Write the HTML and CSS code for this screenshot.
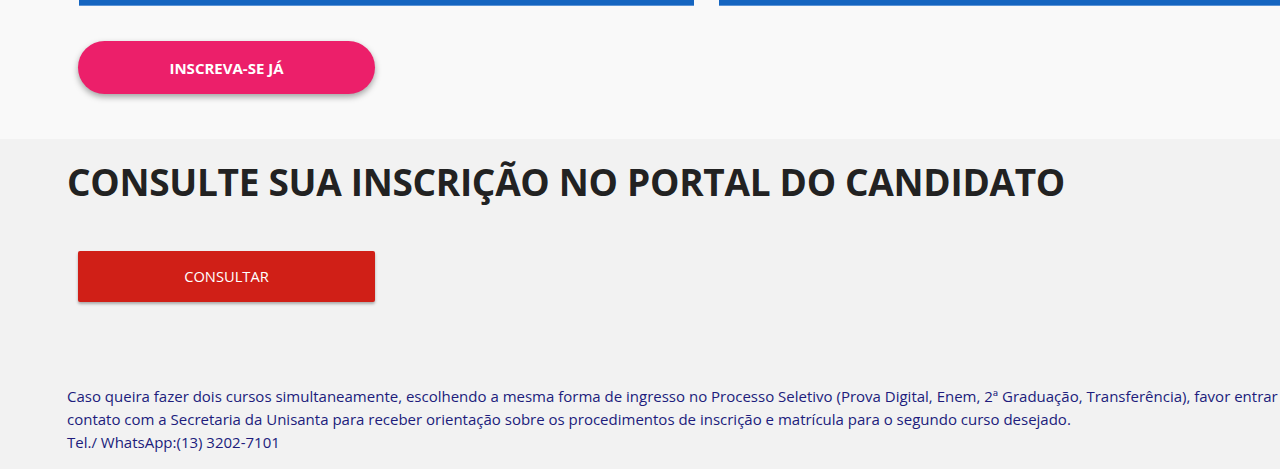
FILE: index.html
```html
<!DOCTYPE html>
<html lang="pt-BR">
<head>
<meta charset="utf-8">
<link rel="stylesheet" href="styles.css">
</head>
<body>
<section class="top">
  <div class="cards">
    <div class="card"></div>
    <div class="card card-wide"></div>
  </div>
  <a class="btn-pink" href="#">INSCREVA-SE JÁ</a>
</section>
<section class="consult">
  <h2 class="title">CONSULTE SUA INSCRIÇÃO NO PORTAL DO CANDIDATO</h2>
  <a class="btn-red" href="#">CONSULTAR</a>
  <p class="note">Caso queira fazer dois cursos simultaneamente, escolhendo a mesma forma de ingresso no Processo Seletivo (Prova Digital, Enem, 2ª Graduação, Transferência), favor entrar em contato com a Secretaria da Unisanta para receber orientação sobre os procedimentos de inscrição e matrícula para o segundo curso desejado.<br>Tel./ WhatsApp:(13) 3202-7101</p>
</section>
</body>
</html>
```
FILE: styles.css
```css
* { box-sizing: border-box; }
html, body { margin: 0; padding: 0; overflow: hidden; }
body {
  font-family: "Open Sans", "DejaVu Sans", sans-serif;
  background: #f2f2f2;
  width: 1280px;
  height: 469px;
}
.top {
  background: #f9f9f9;
  height: 139px;
  padding-left: 78px;
}
.cards {
  display: flex;
  gap: 25px;
  height: 6px;
  margin-left: 1px;
}
.card {
  flex: 0 0 615px;
  height: 6px;
  background: #1565c0;
  border-bottom: 1px solid #5b94d6;
}
.card-wide { flex-basis: 600px; }
.btn-pink {
  display: flex;
  align-items: center;
  justify-content: center;
  margin-top: 35px;
  width: 297px;
  height: 53px;
  border-radius: 27px;
  background: #ec1f6a;
  color: #fff;
  font-weight: 700;
  font-size: 15px;
  text-decoration: none;
  box-shadow: 0 3px 6px rgba(0,0,0,0.35);
}
.consult {
  padding-left: 67px;
}
.title {
  margin: 0;
  padding-top: 17px;
  font-size: 37px;
  line-height: 52px;
  font-weight: 700;
  color: #222;
  letter-spacing: -0.3px;
}
.btn-red {
  display: flex;
  align-items: center;
  justify-content: center;
  margin-top: 43px;
  margin-left: 11px;
  width: 297px;
  height: 51px;
  border-radius: 2px;
  background: #d01f17;
  color: #fff;
  font-size: 14.7px;
  padding-bottom: 2px;
  text-decoration: none;
  box-shadow: 0 2px 3px rgba(0,0,0,0.3);
}
.note {
  margin: 83px 0 0;
  width: 1240px;
  font-size: 15px;
  line-height: 23px;
  color: #201c7c;
}
```
